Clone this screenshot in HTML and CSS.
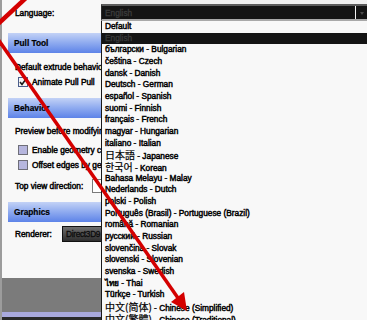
FILE: index.html
```html
<!DOCTYPE html>
<html lang="en">
<head>
    <meta charset="UTF-8">
    <title>Options - Language</title>
    <link rel="stylesheet" href="styles.css">
</head>
<body>
    <div class="window">
        <div class="side">
            <div class="panel">
                <div class="field lang-row">Language:</div>
                <div class="group pull">Pull Tool</div>
                <div class="field after-group">Default extrude behavior:</div>
                <div class="field check-row tight">
                    <span class="box checked">
                        <svg width="8" height="8" viewBox="0 0 8 8"><path d="M1 4 L3 6.5 L7 1" fill="none" stroke="#1a1a1a" stroke-width="1.6"/></svg>
                    </span>
                    Animate Pull Pull
                    <span class="radio"></span>
                </div>
                <div class="group">Behavior</div>
                <div class="field preview">Preview before modifying:</div>
                <div class="field check-row first-check"><span class="box"></span>Enable geometry cache</div>
                <div class="field check-row tight"><span class="box"></span>Offset edges by geometry</div>
                <div class="field pick-row">
                    <span class="pick-label">Top view direction:</span>
                    <span class="mini-combo"></span>
                </div>
                <div class="group">Graphics</div>
                <div class="field render-row">
                    <span class="render-label">Renderer:</span>
                    <span class="btn">Direct3D9</span>
                </div>
            </div>
            <div class="footer"></div>
            <div class="taskbar"></div>
            <div class="edge"></div>
        </div>

        <div class="dropdown">
            <div class="combo">
                <span class="combo-text">English</span>
                <span class="caret"></span>
                <span class="arrow"></span>
            </div>
            <ul class="list">
                <li>Default</li>
                <li class="sel">English</li>
                <li>български - Bulgarian</li>
                <li>čeština - Czech</li>
                <li>dansk - Danish</li>
                <li>Deutsch - German</li>
                <li>español - Spanish</li>
                <li>suomi - Finnish</li>
                <li>français - French</li>
                <li>magyar - Hungarian</li>
                <li>italiano - Italian</li>
                <li><span class="cjk jp">日本語</span> - Japanese</li>
                <li><span class="cjk kr">한국어</span> - Korean</li>
                <li>Bahasa Melayu - Malay</li>
                <li>Nederlands - Dutch</li>
                <li>polski - Polish</li>
                <li>Português (Brasil) - Portuguese (Brazil)</li>
                <li>română - Romanian</li>
                <li>русский - Russian</li>
                <li>slovenčina - Slovak</li>
                <li>slovenski - Slovenian</li>
                <li>svenska - Swedish</li>
                <li>ไทย - Thai</li>
                <li>Türkçe - Turkish</li>
                <li><span class="cjk sc">中文(简体)</span> - Chinese (Simplified)</li>
                <li><span class="cjk tc">中文(繁體)</span> - Chinese (Traditional)</li>
            </ul>
        </div>
    </div>

    <!-- red markup arrows drawn over the screenshot -->
    <svg class="marks" width="367" height="320" viewBox="0 0 367 320">
        <line x1="27" y1="-3" x2="-3" y2="25" stroke="#d40000" stroke-width="4.5"/>
        <line x1="-5" y1="35" x2="178" y2="298" stroke="#d40000" stroke-width="3.5"/>
        <polygon points="187,311 171,302 184,292" fill="#d40000"/>
    </svg>
</body>
</html>
```

FILE: styles.css
```css
html, body {
    margin: 0;
    padding: 0;
}
body {
    width: 367px;
    height: 320px;
    overflow: hidden;
    position: relative;
    background-color: #f0f0f0;
    font-family: "Liberation Sans", Arial, sans-serif;
    font-size: 8.3px;
    color: #000;
}
.window {
    display: flex;
    height: 320px;
}

/* left options panel */
.side {
    width: 99px;
    flex: none;
    display: flex;
    flex-direction: column;
    border-left: 2px solid #9c9c9c;
    overflow: hidden;
}
.panel {
    height: 278px;
    flex: none;
    background-color: #f8f8f8;
}
.field {
    height: 14px;
    line-height: 14px;
    padding-left: 13px;
    white-space: nowrap;
    -webkit-text-stroke: .45px #000;
}
.lang-row { margin-top: 6px; }
.group {
    width: 220px;
    height: 20px;
    line-height: 20px;
    margin-left: 6px;
    margin-top: 9px;
    padding-left: 6px;
    font-weight: bold;
    white-space: nowrap;
    background: linear-gradient(#c3d2f6, #93aef0 45%, #5d83e8);
    -webkit-text-stroke: .2px #000;
}
.group.pull { margin-top: 13px; }
.after-group { margin-top: 7px; }
.tight { margin-top: 1px; }
.preview { margin-top: 6px; }
.first-check { margin-top: 5px; }
.pick-row { margin-top: 7px; }
.render-row { margin-top: 4px; height: 16px; line-height: 16px; }

.check-row {
    display: flex;
    align-items: center;
    padding-left: 16px;
}
.box {
    width: 8px;
    height: 8px;
    flex: none;
    margin-right: 4px;
    border: 1px solid #6e6e78;
    background-color: #b6b6de;
    display: flex;
    align-items: center;
    justify-content: center;
}
.box.checked {
    border-color: #4a5d8c;
    background-color: #f4f4f4;
}
.radio {
    width: 8px;
    height: 8px;
    flex: none;
    margin-left: 6px;
    border: 1px solid #5c74b8;
    border-radius: 50%;
    background-color: #eef0f8;
}
.pick-row, .render-row {
    display: flex;
    align-items: center;
}
.pick-label {
    width: 77px;
    flex: none;
}
.mini-combo {
    width: 30px;
    height: 12px;
    flex: none;
    border: 1px solid #7a7a7a;
    background-color: #fff;
}
.render-label {
    width: 47px;
    flex: none;
}
.btn {
    width: 60px;
    height: 14px;
    line-height: 14px;
    flex: none;
    padding-left: 3px;
    letter-spacing: -.3px;
    border: 1px solid #111;
    background: linear-gradient(#6e6e6e, #2e2e2e);
    color: #0c0c0c;
    -webkit-text-stroke: .3px #0c0c0c;
}
.footer {
    flex: 1;
    background-color: #7b7b7b;
}
.taskbar {
    height: 5px;
    flex: none;
    background-color: #a9a9dd;
}
.edge {
    height: 3px;
    flex: none;
    background-color: #2a2a2a;
}

/* language dropdown */
.dropdown {
    flex: 1;
    display: flex;
    flex-direction: column;
    padding-top: 4px;
    overflow: hidden;
}
.combo {
    height: 13px;
    flex: none;
    display: flex;
    align-items: center;
    border-top: 2px solid #5c5c5c;
    border-bottom: 2px solid #a8a8a8;
    border-left: 1px solid #2a2a2a;
    background-color: #141414;
}
.combo-text {
    flex: 1;
    padding-left: 3px;
    color: #3c3c3c;
    -webkit-text-stroke: .3px #3c3c3c;
}
.caret {
    width: 1px;
    height: 13px;
    background-color: #f2f2f2;
}
.arrow {
    width: 0;
    height: 0;
    margin: 1px 3px 0 4px;
    border-left: 2.5px solid transparent;
    border-right: 2.5px solid transparent;
    border-top: 3px solid #4a4a4a;
}
.list {
    flex: 1;
    margin: 0;
    padding: 0;
    list-style: none;
    border-left: 1px solid #1a1a1a;
    background-color: #f8f8f8;
}
.list li {
    height: 11.68px;
    line-height: 11.68px;
    padding-left: 3px;
    white-space: nowrap;
    -webkit-text-stroke: .45px #000;
}
.list li.sel {
    background-color: #141414;
    color: #3a3a3a;
    -webkit-text-stroke: .3px #3a3a3a;
}
.cjk {
    font-size: 10px;
    -webkit-text-stroke: .2px #000;
}
.cjk.jp { font-family: "Noto Sans CJK JP", sans-serif; }
.cjk.kr { font-family: "Noto Sans CJK KR", sans-serif; }
.cjk.sc { font-family: "Noto Sans CJK SC", sans-serif; }
.cjk.tc { font-family: "Noto Sans CJK TC", sans-serif; }

.marks {
    position: absolute;
    top: 0;
    left: 0;
    pointer-events: none;
}
```
